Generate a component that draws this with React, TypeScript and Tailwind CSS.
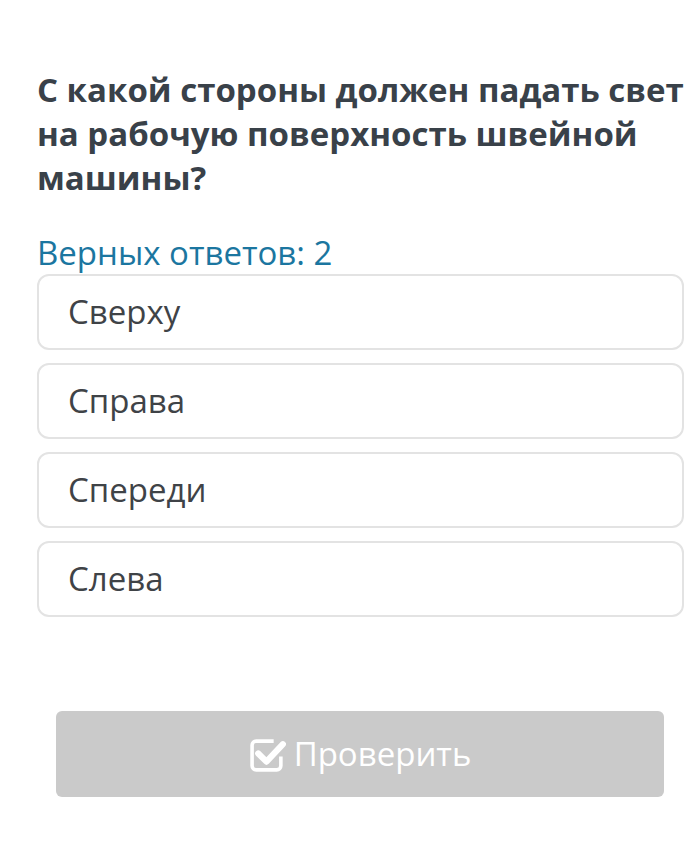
export default function App() {
  const options = ["Сверху", "Справа", "Спереди", "Слева"];
  return (
    <div className="min-h-[843px] w-[691px] bg-white" style={{ fontFamily: '"Open Sans", sans-serif' }}>
      <div className="pl-[37px] pr-[7px] pt-[68px]">
        <h1 className="whitespace-nowrap text-[33px] font-bold leading-[44px] text-[#394149]">
          С какой стороны должен падать свет
          <br />
          на рабочую поверхность швейной
          <br />
          машины?
        </h1>
        <div className="mt-[33px] text-[33px] leading-[40px] text-[#1b76a0]">Верных ответов: 2</div>
        <div className="mt-[1px] flex flex-col gap-[13px]">
          {options.map((o) => (
            <div
              key={o}
              className="flex h-[76px] items-center rounded-[12px] border-2 border-[#e3e3e3] pl-[29px] text-[33px] text-[#3f4347]"
            >
              {o}
            </div>
          ))}
        </div>
      </div>
      <div className="mt-[94px] pl-[56px] pr-[27px]">
        <div className="flex h-[86px] items-center justify-center gap-[8px] rounded-[6px] bg-[#cacaca] text-[33px] text-white">
          <svg width="37" height="37" viewBox="0 0 36 36" fill="none">
            <path d="M24 5 H7 a4 4 0 0 0 -4 4 v20 a4 4 0 0 0 4 4 h20 a4 4 0 0 0 4 -4 v-9" stroke="white" strokeWidth="3.5" fill="none" />
            <path d="M9 17 L17 25 L33 8" stroke="white" strokeWidth="6" strokeLinecap="round" strokeLinejoin="round" fill="none" />
          </svg>
          <span>Проверить</span>
        </div>
      </div>
    </div>
  );
}
